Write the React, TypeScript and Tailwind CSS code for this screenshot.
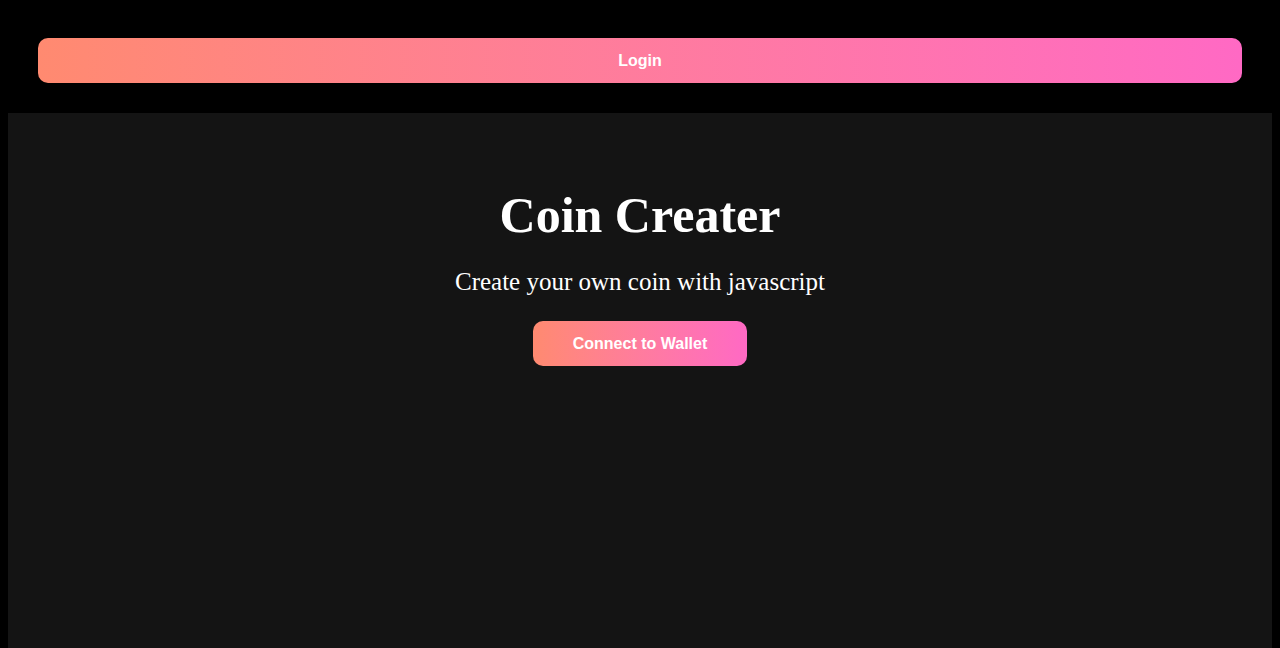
export default function App() {
  return (
    <div className="bg-black px-2 pt-2" style={{ fontFamily: '"Liberation Sans", Arial, sans-serif' }}>
      <div className="p-[30px]">
        <button className="flex h-[45px] w-full items-center justify-center rounded-[10px] bg-gradient-to-r from-[#ff8a70] to-[#ff69c4] text-base font-bold text-white">
          Login
        </button>
      </div>
      <div className="flex min-h-[535px] flex-col items-center bg-[#141414] pt-[70px] text-white">
        <h1 className="text-[50px] font-bold leading-[64px]" style={{ fontFamily: '"Liberation Serif", "Times New Roman", serif' }}>
          Coin Creater
        </h1>
        <p className="mt-[20px] text-[25px] leading-[30px]" style={{ fontFamily: '"Liberation Serif", "Times New Roman", serif' }}>
          Create your own coin with javascript
        </p>
        <button className="mt-[24px] flex h-[45px] w-[214px] items-center justify-center rounded-[10px] bg-gradient-to-r from-[#ff8a70] to-[#ff69c4] text-base font-bold text-white">
          Connect to Wallet
        </button>
      </div>
    </div>
  );
}
